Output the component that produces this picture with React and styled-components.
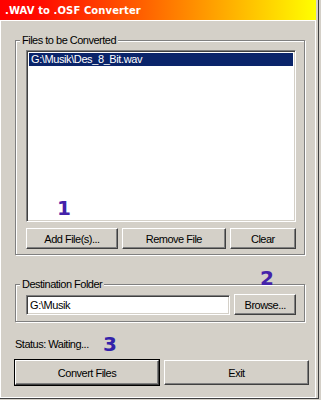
import React from 'react'
import { styled, createGlobalStyle } from 'styled-components'

const GlobalStyle = createGlobalStyle`
  html, body {
    margin: 0;
    padding: 0;
    background: #d4d0c8;
  }
  * {
    box-sizing: border-box;
  }
`

const App = () => {
  return (
    <Window>
      <GlobalStyle />
      <TitleBar>.WAV to .OSF Converter</TitleBar>
      <Client>
        <Group $height={215}>
          <Legend>Files to be Converted</Legend>
          <ListBox>
            <ListItem $selected>G:\Musik\Des_8_Bit.wav</ListItem>
            <Marker $left={30} $top={145}>1</Marker>
          </ListBox>
          <ButtonRow>
            <Button $width={93}>Add File(s)...</Button>
            <Button $width={105}>Remove File</Button>
            <Button $width={67}>Clear</Button>
          </ButtonRow>
        </Group>

        <Group $height={38} $mt={29}>
          <Legend>Destination Folder</Legend>
          <Marker $left={244} $top={-19}>2</Marker>
          <FolderRow>
            <TextInput defaultValue="G:\Musik" />
            <Button $width={62}>Browse...</Button>
          </FolderRow>
        </Group>

        <StatusRow>
          <StatusText>Status: Waiting...</StatusText>
          <InlineMarker>3</InlineMarker>
        </StatusRow>

        <MainRow>
          <Button $width={144} $height={25} $default>Convert Files</Button>
          <Button $width={145} $height={25}>Exit</Button>
        </MainRow>
      </Client>
    </Window>
  )
}

const Window = styled.div`
  width: 319px;
  height: 399px;
  display: flex;
  flex-direction: column;
  background: #d4d0c8;
  border-right: 1px solid #404040;
  border-bottom: 1px solid #404040;
  font-family: "Liberation Sans", Arial, sans-serif;
  font-size: 11px;
  color: #000;
`

const TitleBar = styled.div`
  height: 20px;
  width: 316px;
  padding-left: 5px;
  display: flex;
  align-items: center;
  background: linear-gradient(90deg, #ff0000 0%, #ff0a00 12%, #ff6000 45%, #ffa800 70%, #ffff00 100%);
  color: #fff;
  font-family: "DejaVu Sans", Verdana, sans-serif;
  font-weight: bold;
  font-size: 10px;
  letter-spacing: 0.1px;
`

const Client = styled.div`
  flex: 1;
  width: 316px;
  display: flex;
  flex-direction: column;
  padding: 19px 0 0 14px;
  border-top: 1px solid #fff;
  border-left: 1px solid #fff;
  border-right: 1px solid #fff;
  border-bottom: 1px solid #fff;
  box-shadow: -1px 0 #808080;
`

const Group = styled.div`
  position: relative;
  width: 290px;
  height: ${({ $height }) => $height}px;
  margin-top: ${({ $mt }) => $mt || 0}px;
  padding: 9px 8px 0 10px;
  border: 1px solid #808080;
  box-shadow: inset 1px 1px #fff, 1px 1px #fff;
`

const Legend = styled.span`
  position: absolute;
  top: -7px;
  left: 4px;
  padding: 0 2px;
  line-height: 12px;
  background: #d4d0c8;
  letter-spacing: -0.5px;
`

const ListBox = styled.div`
  position: relative;
  width: 270px;
  height: 172px;
  padding: 1px;
  background: #fff;
  border-top: 1px solid #808080;
  border-left: 1px solid #808080;
  border-right: 1px solid #fff;
  border-bottom: 1px solid #fff;
  box-shadow: inset 1px 1px #404040, inset -1px -1px #d4d0c8;
`

const ListItem = styled.div`
  height: 13px;
  margin: 1px 1px 0 1px;
  padding-left: 2px;
  line-height: 13px;
  letter-spacing: -0.4px;
  background: ${({ $selected }) => ($selected ? '#0a246a' : 'transparent')};
  color: ${({ $selected }) => ($selected ? '#fff' : '#000')};
`

const Marker = styled.span`
  position: absolute;
  left: ${({ $left }) => $left}px;
  top: ${({ $top }) => $top}px;
  font-family: "DejaVu Sans", Verdana, sans-serif;
  font-weight: bold;
  font-size: 20px;
  line-height: 24px;
  color: #4422aa;
`

const InlineMarker = styled.span`
  font-family: "DejaVu Sans", Verdana, sans-serif;
  font-weight: bold;
  font-size: 20px;
  line-height: 24px;
  color: #3322aa;
`

const ButtonRow = styled.div`
  display: flex;
  gap: 4px;
  margin-top: 6px;
`

const FolderRow = styled.div`
  display: flex;
  align-items: center;
  gap: 4px;
`

const Button = styled.div`
  width: ${({ $width }) => $width}px;
  height: ${({ $height }) => $height || 21}px;
  display: flex;
  align-items: center;
  justify-content: center;
  background: #d4d0c8;
  letter-spacing: -0.5px;
  border-top: 1px solid #fff;
  border-left: 1px solid #fff;
  border-right: 1px solid #404040;
  border-bottom: 1px solid #404040;
  box-shadow: inset -1px -1px #808080;
  outline: ${({ $default }) => ($default ? '1px solid #000' : 'none')};
`

const TextInput = styled.input`
  width: 206px;
  height: 20px;
  margin: 0;
  padding: 0 3px;
  font-family: "Liberation Sans", Arial, sans-serif;
  font-size: 11px;
  letter-spacing: -0.4px;
  background: #fff;
  border-top: 1px solid #808080;
  border-left: 1px solid #808080;
  border-right: 1px solid #fff;
  border-bottom: 1px solid #fff;
  box-shadow: inset 1px 1px #404040, inset -1px -1px #d4d0c8;
  outline: none;
`

const StatusRow = styled.div`
  display: flex;
  align-items: center;
  height: 24px;
  margin-top: 10px;
`

const StatusText = styled.span`
  width: 88px;
  letter-spacing: -0.5px;
`

const MainRow = styled.div`
  display: flex;
  gap: 5px;
  margin-top: 4px;
`

export default App
